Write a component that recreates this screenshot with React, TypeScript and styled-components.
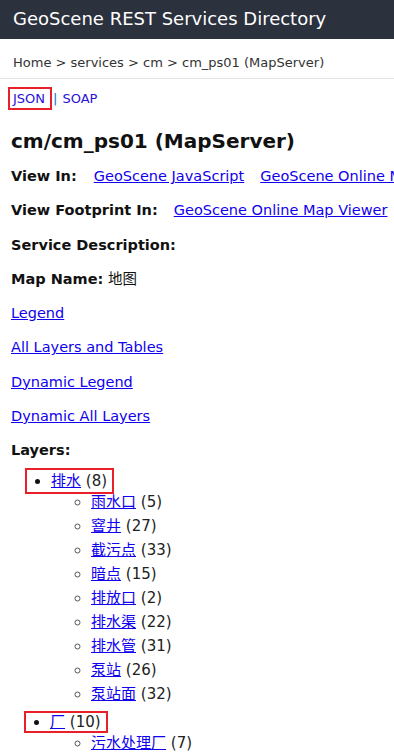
import styled, { createGlobalStyle } from "styled-components";

// Данные по слоям сервиса
type Layer = { name: string; count: number; children?: Layer[]; tall?: boolean };

const layers: Layer[] = [
    {
        name: "排水", count: 8, tall: true,
        children: [
            { name: "雨水口", count: 5 },
            { name: "窨井", count: 27 },
            { name: "截污点", count: 33 },
            { name: "暗点", count: 15 },
            { name: "排放口", count: 2 },
            { name: "排水渠", count: 22 },
            { name: "排水管", count: 31 },
            { name: "泵站", count: 26 },
            { name: "泵站面", count: 32 },
        ],
    },
    {
        name: "厂", count: 10,
        children: [{ name: "污水处理厂", count: 7 }],
    },
];

const links = ["Legend", "All Layers and Tables", "Dynamic Legend", "Dynamic All Layers"];

const GlobalStyle = createGlobalStyle`
    html, body {
        margin: 0;
        padding: 0;
        background: #fff;
    }
    body {
        font-family: "DejaVu Sans", Verdana, "Noto Sans CJK SC", sans-serif;
        color: #111;
        overflow: hidden;
    }
`;

export default function App() {
    return (
        <>
            <GlobalStyle />
            <Header>GeoScene REST Services Directory</Header>
            <Breadcrumbs>Home &gt; services &gt; cm &gt; cm_ps01 (MapServer)</Breadcrumbs>
            <Content>
                <Formats>
                    <FormatBox><FormatLink href="#">JSON</FormatLink></FormatBox>
                    <Sep>|</Sep>
                    <FormatLink href="#">SOAP</FormatLink>
                </Formats>
                <Title>cm/cm_ps01 (MapServer)</Title>
                <Para first>
                    <Label gap={17}>View In:</Label>
                    <Link href="#">GeoScene JavaScript</Link>
                    <Link href="#">GeoScene Online Map Viewer</Link>
                </Para>
                <Para>
                    <Label gap={16}>View Footprint In:</Label>
                    <Link href="#">GeoScene Online Map Viewer</Link>
                </Para>
                <Para><Label>Service Description:</Label></Para>
                <Para><Label>Map Name:</Label> 地图</Para>
                {links.map((l) => (
                    <Para key={l}><Link href="#">{l}</Link></Para>
                ))}
                <Para><Label>Layers:</Label></Para>
                <LayerList>
                    {layers.map((layer) => (
                        <TopItem key={layer.name}>
                            {/* Выделенная красной рамкой строка слоя */}
                            <TopLabel tall={layer.tall}>
                                <Dot />
                                <Link href="#">{layer.name}</Link>&nbsp;({layer.count})
                            </TopLabel>
                            {layer.children && (
                                <SubList>
                                    {layer.children.map((c) => (
                                        <SubItem key={c.name}>
                                            <Link href="#">{c.name}</Link> ({c.count})
                                        </SubItem>
                                    ))}
                                </SubList>
                            )}
                        </TopItem>
                    ))}
                </LayerList>
            </Content>
        </>
    );
}

// Тёмная шапка
const Header = styled.div`
    height: 39px;
    background: #2b313d;
    color: #fff;
    font-size: 18px;
    line-height: 37px;
    padding-left: 13px;
    white-space: nowrap;
`;

// Хлебные крошки
const Breadcrumbs = styled.div`
    font-size: 13px;
    color: #333;
    padding: 15px 13px 0;
    height: 24px;
    line-height: 18px;
    border-bottom: 1px solid #e4e4e4;
    white-space: nowrap;
`;

const Content = styled.div`
    padding: 0 11px;
    white-space: nowrap;
`;

const Formats = styled.div`
    font-size: 13px;
    line-height: 16px;
    margin-top: 8px;
    display: flex;
    align-items: center;
`;

const FormatBox = styled.span`
    display: inline-block;
    margin-left: -3px;
    padding: 2px 5px 1px 3px;
    border: 2px solid #e8202a;
`;

const FormatLink = styled.a`
    color: #2a10d8;
    text-decoration: none;
`;

const Sep = styled.span`
    color: #1a6ad0;
    margin: 0 5px 0 1px;
`;

const Link = styled.a`
    color: #1000ee;
    text-decoration: underline;
    margin-right: 16px;
    &:last-child {
        margin-right: 0;
    }
`;

const Title = styled.h2`
    font-size: 20px;
    font-weight: bold;
    margin: 18px 0 0;
    line-height: 26px;
`;

const Para = styled.p<{ first?: boolean }>`
    font-size: 14.5px;
    line-height: 20px;
    margin: ${(p) => (p.first ? 12 : 14.25)}px 0 0;
`;

const Label = styled.b<{ gap?: number }>`
    margin-right: ${(p) => p.gap ?? 0}px;
`;

const LayerList = styled.ul`
    margin: 12px 0 0;
    padding-left: 16px;
    font-size: 15px;
    list-style: none;
`;

const TopItem = styled.li`
    line-height: 18px;
    margin-bottom: 7px;
`;

const TopLabel = styled.div<{ tall?: boolean }>`
    display: flex;
    align-items: center;
    width: fit-content;
    height: ${(p) => (p.tall ? 22 : 18)}px;
    margin: ${(p) => (p.tall ? "-2px 0 -2px 0" : "0 0 0 -1px")};
    padding: 0 5px 0 8px;
    outline: 2px solid #e8202a;
    color: #222;
`;

const Dot = styled.span`
    width: 5px;
    height: 5px;
    border-radius: 50%;
    background: #111;
    margin-right: 11px;
`;

const SubList = styled.ul`
    margin: 0;
    padding-left: 64px;
    list-style: circle;
`;

const SubItem = styled.li`
    line-height: 24px;
    color: #222;
    &::marker {
        color: #555;
    }
`;
